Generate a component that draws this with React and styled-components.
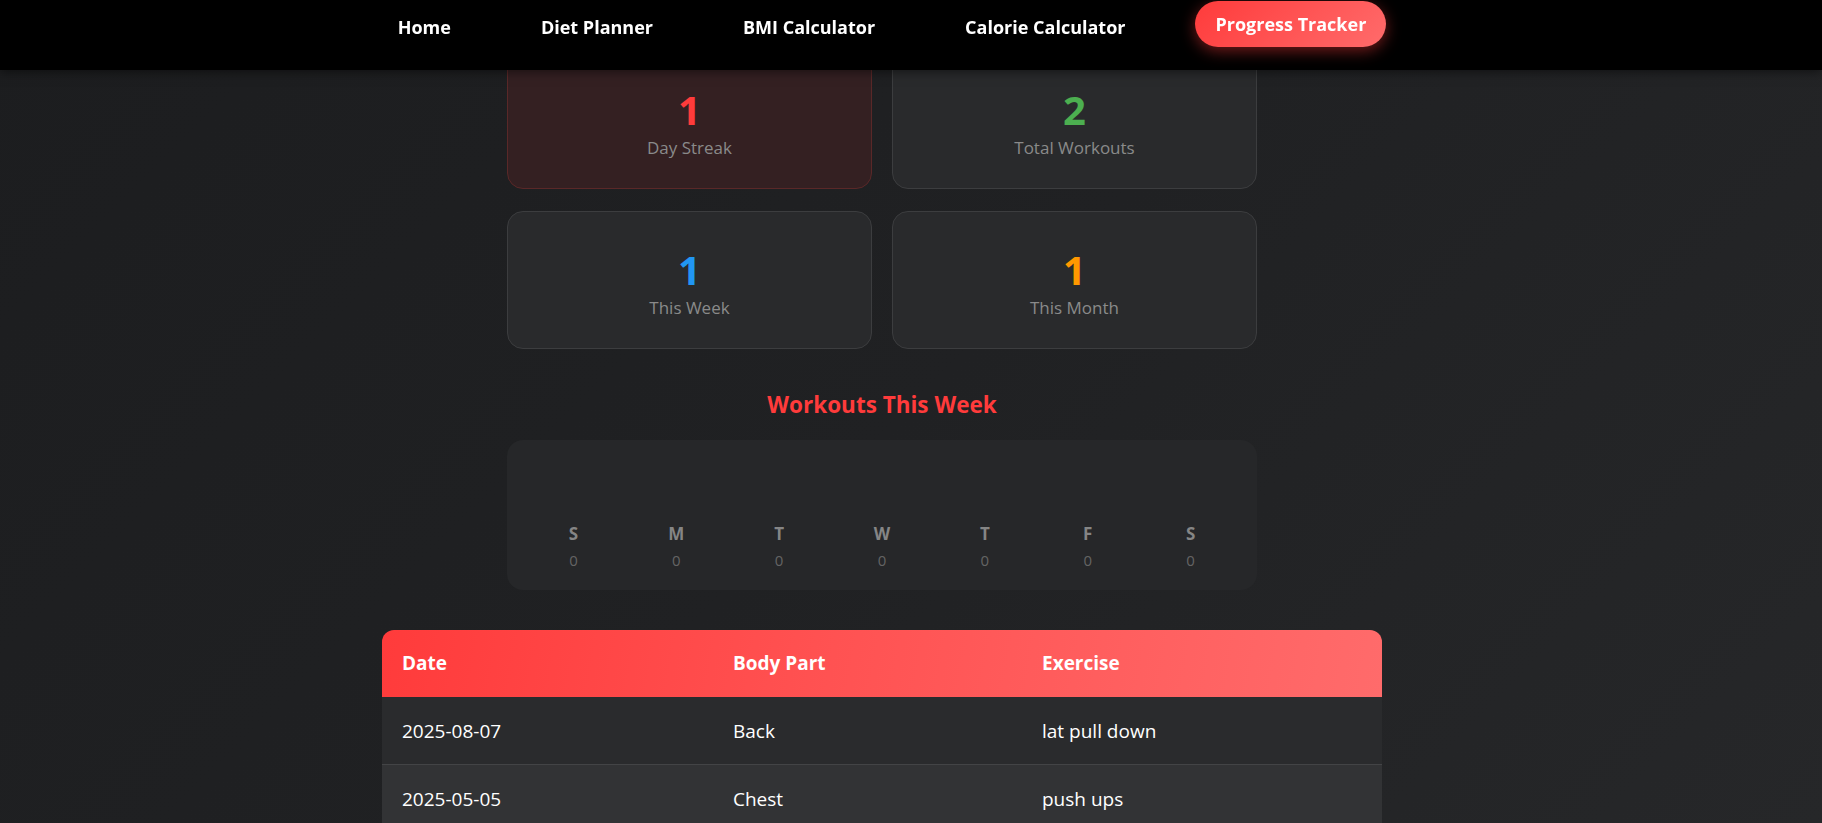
import React from "react";
import styled, { createGlobalStyle } from "styled-components";

const GlobalStyle = createGlobalStyle`
  html, body {
    margin: 0;
    padding: 0;
    height: 100%;
    overflow: hidden;
  }
  body {
    background: linear-gradient(135deg, #1c1d1f 0%, #202123 50%, #262729 100%);
    font-family: "Open Sans", "Noto Sans", sans-serif;
    color: #fff;
    min-height: 823px;
  }
  * { box-sizing: border-box; }
`;

const NavBar = styled.nav`
  position: fixed;
  top: 0;
  left: 0;
  right: 0;
  height: 70px;
  background: #000;
  z-index: 10;
  box-shadow: 0 2px 10px rgba(0, 0, 0, 0.5);
`;

const NavInner = styled.ul`
  width: 1764px;
  margin: 0;
  padding: 4px 0 0;
  list-style: none;
  display: flex;
  justify-content: center;
  align-items: flex-start;
  gap: 50px;
`;

const NavLink = styled.li`
  padding: 10px 20px;
  font-size: 18px;
  font-weight: 700;
  line-height: 26px;
  color: #fff;
  white-space: nowrap;
  border-radius: 25px;
  ${(p) =>
    p.$active &&
    `
    background: linear-gradient(135deg, #ff3b3b 0%, #ff6b6b 100%);
    box-shadow: 0 4px 15px rgba(255, 59, 59, 0.45);
    transform: translateY(-3px);
  `}
`;

const Page = styled.main`
  width: 1764px;
  padding-top: 51px;
  display: flex;
  flex-direction: column;
  align-items: center;
`;

const StatsGrid = styled.div`
  width: 750px;
  display: grid;
  grid-template-columns: 1fr 1fr;
  column-gap: 20px;
  row-gap: 22px;
`;

const StatCard = styled.div`
  height: 138px;
  border-radius: 16px;
  padding: 36px 20px 0;
  display: flex;
  flex-direction: column;
  align-items: center;
  background: ${(p) => (p.$highlight ? "#342022" : "#292a2c")};
  border: 1px solid ${(p) => (p.$highlight ? "#5a2828" : "#3c3d3f")};
`;

const StatValue = styled.div`
  font-size: 40px;
  font-weight: 700;
  line-height: 44px;
  color: ${(p) => p.$color};
`;

const StatLabel = styled.div`
  margin-top: 4px;
  font-size: 17px;
  line-height: 23px;
  color: #8a8a8a;
`;

const SectionTitle = styled.h3`
  margin: 40px 0 20px;
  font-size: 22.5px;
  font-weight: 700;
  line-height: 31px;
  color: #ff3b3b;
`;

const ChartBox = styled.div`
  width: 750px;
  height: 150px;
  border-radius: 16px;
  background: #262729;
  padding: 20px 15px 20px;
  display: flex;
  align-items: flex-end;
`;

const DayColumn = styled.div`
  flex: 1;
  display: flex;
  flex-direction: column;
  align-items: center;
`;

const Bar = styled.div`
  width: 30px;
  border-radius: 6px 6px 0 0;
  background: linear-gradient(180deg, #ff6b6b, #ff3b3b);
`;

const DayLetter = styled.div`
  font-size: 17px;
  font-weight: 700;
  line-height: 23px;
  color: #858585;
`;

const DayCount = styled.div`
  margin-top: 5px;
  font-size: 15px;
  line-height: 20px;
  color: #646464;
`;

const TableWrap = styled.div`
  width: 1000px;
  margin-top: 40px;
  border-radius: 12px 12px 0 0;
  overflow: hidden;
`;

const Table = styled.table`
  width: 100%;
  border-collapse: collapse;
  table-layout: fixed;
`;

const HeadRow = styled.tr`
  background: linear-gradient(100deg, #ff3b3b 0%, #ff5252 45%, #ff6b6b 100%);
`;

const Th = styled.th`
  width: ${(p) => p.$w};
  padding: 20px;
  text-align: left;
  font-size: 19px;
  font-weight: 700;
  line-height: 27px;
  color: #fff;
`;

const Row = styled.tr`
  background: ${(p) => (p.$alt ? "#323335" : "#2a2b2d")};
  border-bottom: 1px solid #434446;
`;

const Td = styled.td`
  padding: 21px 20px 20px;
  font-size: 19px;
  line-height: 26px;
  color: #fff;
`;

const navItems = ["Home", "Diet Planner", "BMI Calculator", "Calorie Calculator", "Progress Tracker"];

const stats = [
  { value: 1, label: "Day Streak", color: "#ff3b3b", highlight: true },
  { value: 2, label: "Total Workouts", color: "#4caf50" },
  { value: 1, label: "This Week", color: "#2196f3" },
  { value: 1, label: "This Month", color: "#ff9800" },
];

const days = ["S", "M", "T", "W", "T", "F", "S"].map((d) => ({ day: d, count: 0 }));

const workouts = [
  { date: "2025-08-07", part: "Back", exercise: "lat pull down" },
  { date: "2025-05-05", part: "Chest", exercise: "push ups" },
];

export default function App() {
  return (
    <>
      <GlobalStyle />
      <NavBar>
        <NavInner>
          {navItems.map((item) => (
            <NavLink key={item} $active={item === "Progress Tracker"}>
              {item}
            </NavLink>
          ))}
        </NavInner>
      </NavBar>
      <Page>
        <StatsGrid>
          {stats.map((s) => (
            <StatCard key={s.label} $highlight={s.highlight}>
              <StatValue $color={s.color}>{s.value}</StatValue>
              <StatLabel>{s.label}</StatLabel>
            </StatCard>
          ))}
        </StatsGrid>
        <SectionTitle>Workouts This Week</SectionTitle>
        <ChartBox>
          {days.map((d, i) => (
            <DayColumn key={i}>
              <Bar style={{ height: `${d.count * 20}px` }} />
              <DayLetter>{d.day}</DayLetter>
              <DayCount>{d.count}</DayCount>
            </DayColumn>
          ))}
        </ChartBox>
        <TableWrap>
          <Table>
            <thead>
              <HeadRow>
                <Th $w="33.1%">Date</Th>
                <Th $w="30.9%">Body Part</Th>
                <Th $w="36%">Exercise</Th>
              </HeadRow>
            </thead>
            <tbody>
              {workouts.map((w, i) => (
                <Row key={w.date} $alt={i % 2 === 1}>
                  <Td>{w.date}</Td>
                  <Td>{w.part}</Td>
                  <Td>{w.exercise}</Td>
                </Row>
              ))}
            </tbody>
          </Table>
        </TableWrap>
      </Page>
    </>
  );
}
